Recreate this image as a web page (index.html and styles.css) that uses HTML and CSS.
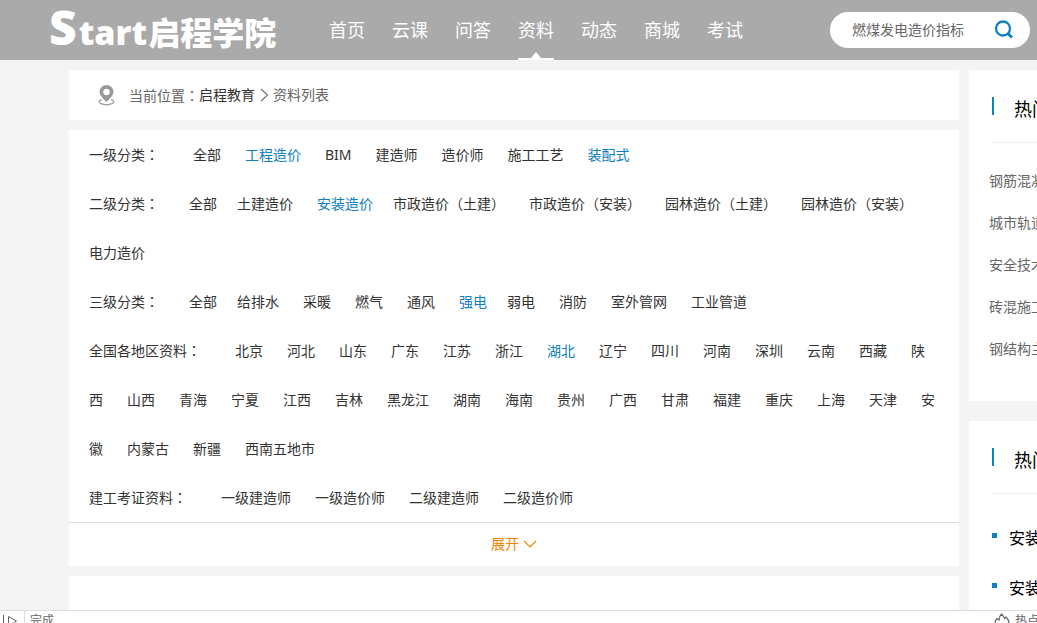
FILE: index.html
```html
<!DOCTYPE html>
<html lang="zh-CN">
<head>
<meta charset="utf-8">
<title>资料列表 - 启程学院</title>
<link rel="stylesheet" href="styles.css">
</head>
<body>
<header class="header">
  <a class="logo" href="#"><span class="logo-s">S</span><span class="logo-en">tart</span><span class="logo-cn">启程学院</span></a>
  <nav class="nav">
    <a href="#">首页</a><a href="#">云课</a><a href="#">问答</a><a class="current" href="#">资料</a><a href="#">动态</a><a href="#">商城</a><a href="#">考试</a>
  </nav>
  <form class="search">
    <input type="text" aria-label="搜索" value="燃煤发电造价指标">
    <button type="button" aria-label="搜索">
      <svg width="20" height="20" viewBox="0 0 20 20" fill="none" stroke="#0e80c4" stroke-width="2.300"><circle cx="9" cy="8.500" r="7"/><path d="M13.500 13l4.500 4.500" stroke-width="3"/></svg>
    </button>
  </form>
</header>

<div class="page">
  <main class="main">
    <div class="card crumbs">
      <svg class="pin" width="18" height="22" viewBox="0 0 18 22"><path fill="#999" fill-rule="evenodd" d="M8.500 1a7 7 0 0 1 7 7c0 3-3.500 6.500-7 10C5 14.500 1.500 11 1.500 8a7 7 0 0 1 7-7zm0 3.800a3.200 3.200 0 1 0 0 6.400 3.200 3.200 0 0 0 0-6.400z"/><path fill="none" stroke="#999" stroke-width="1.300" d="M4 15.500C.500 16.500.500 18.500 3 19.700c3 1.200 8 1.200 11 0 2.500-1.200 2.500-3.200-1-4.200"/></svg>
      <span>当前位置<span class="colon" lang="zh-TW">：</span></span><a href="#">启程教育</a>
      <svg class="sep" width="18" height="14" viewBox="0 0 18 14" fill="none" stroke="#777" stroke-width="1.200"><path d="M6 1l6.500 6L6 13"/></svg>
      <span>资料列表</span>
    </div>

    <div class="card filters">
      <div class="row"><span class="label">一级分类<span class="colon" lang="zh-TW">：</span></span><a href="#">全部</a><a class="on" href="#">工程造价</a><a href="#">BIM</a><a href="#">建造师</a><a href="#">造价师</a><a href="#">施工工艺</a><a class="on" href="#">装配式</a></div>
      <div class="row"><span class="label tight">二级分类<span class="colon" lang="zh-TW">：</span></span><a class="tight" href="#">全部</a><a href="#">土建造价</a><a class="on tight" href="#">安装造价</a><a href="#">市政造价（土建）</a><a href="#">市政造价（安装）</a><a href="#">园林造价（土建）</a><a href="#">园林造价（安装）</a><a href="#">电力造价</a></div>
      <div class="row"><span class="label tight">三级分类<span class="colon" lang="zh-TW">：</span></span><a class="tight" href="#">全部</a><a href="#">给排水</a><a href="#">采暖</a><a href="#">燃气</a><a href="#">通风</a><a class="on tight" href="#">强电</a><a href="#">弱电</a><a href="#">消防</a><a href="#">室外管网</a><a href="#">工业管道</a></div>
      <div class="row"><span class="label">全国各地区资料<span class="colon" lang="zh-TW">：</span></span><a href="#">北京</a><a href="#">河北</a><a href="#">山东</a><a href="#">广东</a><a href="#">江苏</a><a href="#">浙江</a><a class="on" href="#">湖北</a><a href="#">辽宁</a><a href="#">四川</a><a href="#">河南</a><a href="#">深圳</a><a href="#">云南</a><a href="#">西藏</a><a href="#">陕西</a><a href="#">山西</a><a href="#">青海</a><a href="#">宁夏</a><a href="#">江西</a><a href="#">吉林</a><a href="#">黑龙江</a><a href="#">湖南</a><a href="#">海南</a><a href="#">贵州</a><a href="#">广西</a><a href="#">甘肃</a><a href="#">福建</a><a href="#">重庆</a><a href="#">上海</a><a href="#">天津</a><a href="#">安徽</a><a href="#">内蒙古</a><a href="#">新疆</a><a href="#">西南五地市</a></div>
      <div class="row"><span class="label">建工考证资料<span class="colon" lang="zh-TW">：</span></span><a href="#">一级建造师</a><a href="#">一级造价师</a><a href="#">二级建造师</a><a href="#">二级造价师</a></div>
      <button class="expand" type="button">展开
        <svg width="14" height="10" viewBox="0 0 14 10" fill="none" stroke="#f08300" stroke-width="1.100"><path d="M1 2l6 6 6-6"/></svg>
      </button>
    </div>

    <div class="card results"></div>
  </main>

  <aside class="aside">
    <section class="card">
      <h2>热门资料</h2>
      <ul class="links">
        <li><a href="#">钢筋混凝土</a></li><li><a href="#">城市轨道</a></li><li><a href="#">安全技术</a></li><li><a href="#">砖混施工</a></li><li><a href="#">钢结构主体</a></li>
      </ul>
    </section>
    <section class="card">
      <h2>热门课程</h2>
      <ul class="courses">
        <li><a href="#">安装造价</a></li><li><a href="#">安装造价</a></li>
      </ul>
    </section>
  </aside>
</div>

<footer class="status">
  <svg class="play" width="24" height="12" viewBox="0 0 24 12" fill="none" stroke="#666"><path d="M3.500 4v8M8.500 12V5.500l8 4.500-3 2"/></svg>
  <span class="state">完成</span>
  <svg class="flame" width="16" height="12" viewBox="0 0 16 12" fill="none" stroke="#666" stroke-width="1.200"><path d="M1 12c0-2 1-3.500 2-4.500l2 1.500c0-3 1-4.500 2.500-6 2 2 2.500 3 3 4.500l1.500-1.500c2 2 3 4 3 6"/></svg>
  <span>热点</span>
</footer>
</body>
</html>
```
FILE: styles.css
```css
* { box-sizing: border-box; }
body {
  margin: 0;
  height: 100vh;
  display: flex;
  flex-direction: column;
  overflow: hidden;
  background: #f4f4f4;
  color: #333;
  font: 14px/20px "Noto Sans", "Noto Sans CJK SC", sans-serif;
}
a { color: inherit; text-decoration: none; }
h2, ul { margin: 0; padding: 0; list-style: none; font-weight: normal; }
svg { display: block; flex: none; }

.header {
  flex: none;
  display: flex;
  align-items: center;
  height: 60px;
  padding: 0 7px 0 49px;
  background: #aaa;
  color: #fff;
}
.logo {
  display: flex;
  align-items: baseline;
  width: 280px;
  height: 60px;
  white-space: nowrap;
}
.logo-s { margin-right: 2px; font: 800 48px/54px "Open Sans", sans-serif; }
.logo-en { font: 800 34px/54px "Open Sans", sans-serif; }
.logo-cn { margin-left: 1px; font: 900 32px/54px "Noto Sans CJK SC", sans-serif; }

.nav { display: flex; gap: 27px; font-size: 18px; line-height: 60px; }
.nav a { position: relative; height: 60px; }
.nav .current { border-bottom: 2px solid #fff; }
.nav .current::after {
  content: "";
  position: absolute;
  bottom: 0;
  left: 50%;
  margin-left: -5px;
  border: 5px solid transparent;
  border-top: 0;
  border-bottom: 6px solid #fff;
}

.search {
  display: flex;
  align-items: center;
  width: 200px;
  height: 36px;
  margin-left: auto;
  padding: 0 16px 0 22px;
  border-radius: 18px;
  background: #fff;
}
.search input {
  flex: 1;
  min-width: 0;
  padding: 0;
  border: 0;
  outline: 0;
  background: none;
  color: #666;
  font: inherit;
}
.search button { padding: 0; border: 0; background: none; }

.page {
  flex: 1;
  min-height: 0;
  display: flex;
  gap: 10px;
  padding: 10px 0 0 69px;
  overflow: hidden;
}
.main { flex: 1; min-width: 0; display: flex; flex-direction: column; gap: 10px; }
.card { background: #fff; }

.crumbs {
  flex: none;
  display: flex;
  align-items: center;
  height: 50px;
  padding-left: 29px;
  color: #666;
}
.crumbs a { color: #333; }
.pin { margin-right: 13px; }
.colon { font-family: "Noto Sans CJK TC", sans-serif; line-height: 20px; }

.filters { flex: none; }
.row { padding: 0 20px; line-height: 49px; }
.row a { margin-right: 24px; }
.row .label { margin-right: 34px; }
.row a.tight { margin-right: 20px; }
.row .label.tight { margin-right: 30px; }
.row .on { color: #0e80c4; }
.expand {
  display: flex;
  align-items: center;
  justify-content: center;
  gap: 4px;
  width: 100%;
  height: 44px;
  padding: 0 0 2px;
  border: 0;
  border-top: 1px solid #ddd;
  background: none;
  color: #f08300;
  font: inherit;
}
.results { flex: 1; }

.aside {
  flex: 0 0 68px;
  display: flex;
  flex-direction: column;
  gap: 20px;
  overflow: hidden;
  white-space: nowrap;
}
.aside .card { flex: none; padding-left: 20px; }
.aside h2 {
  display: flex;
  align-items: center;
  gap: 20px;
  height: 73px;
  margin-left: 3px;
  padding-top: 6px;
  border-bottom: 1px solid #eee;
  color: #000;
  font-size: 18px;
}
.aside h2::before { content: ""; flex: none; width: 2px; height: 18px; margin-bottom: 6px; background: #0e80c4; }
.links { padding: 17px 0 31px; color: #666; line-height: 42px; }
.courses { padding: 19px 0 20px 3px; color: #000; font-size: 16px; line-height: 50px; }
.courses li { display: flex; align-items: center; gap: 12px; }
.courses li::before { content: ""; flex: none; width: 5px; height: 5px; margin-bottom: 5px; background: #0e80c4; }

.status {
  flex: none;
  display: flex;
  height: 13px;
  border-top: 1px solid #ddd;
  overflow: hidden;
  background: #fff;
  color: #666;
  font-size: 12px;
}
.state { margin-right: auto; padding-left: 5px; border-left: 1px solid #ddd; }
.flame { margin-right: 5px; }
.status span:last-child { width: 22px; overflow: hidden; white-space: nowrap; }
```
